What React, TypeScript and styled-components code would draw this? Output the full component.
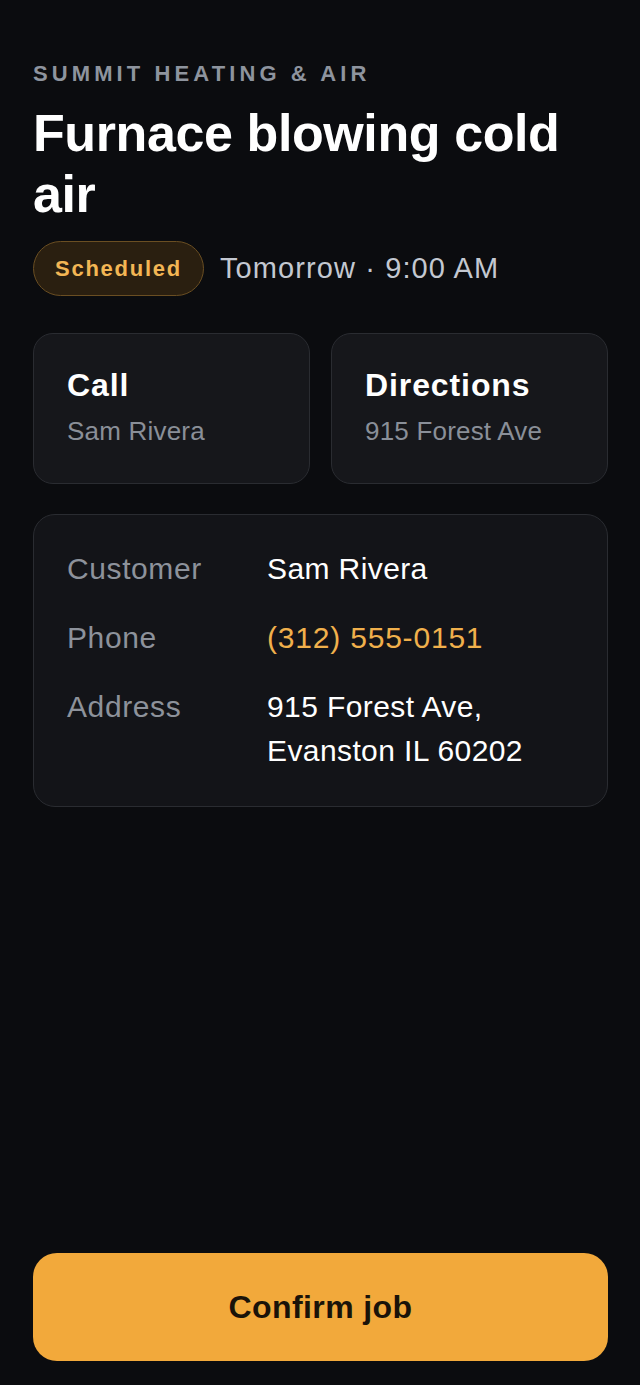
import React from 'react';
import styled, { createGlobalStyle } from 'styled-components';

const GlobalStyle = createGlobalStyle`
  html, body {
    margin: 0;
    padding: 0;
    background: #0b0c0f;
  }
  * {
    box-sizing: border-box;
  }
`;

const Page = styled.div`
  display: flex;
  flex-direction: column;
  min-height: 100vh;
  padding: 60px 32px 24px 33px;
  background: #0b0c0f;
  font-family: 'Liberation Sans', Arial, sans-serif;
  color: #ffffff;
`;

const Eyebrow = styled.div`
  font-size: 22px;
  font-weight: 700;
  letter-spacing: 4.1px;
  color: #8e949e;
  line-height: 28px;
`;

const Title = styled.h1`
  margin: 15px 0 0;
  font-size: 52px;
  font-weight: 700;
  letter-spacing: -0.4px;
  line-height: 61px;
  color: #ffffff;
`;

const StatusRow = styled.div`
  display: flex;
  align-items: center;
  gap: 16px;
  margin-top: 16px;
`;

const Badge = styled.span`
  display: inline-flex;
  align-items: center;
  height: 55px;
  padding: 0 21px;
  border-radius: 28px;
  background: #2a1f10;
  border: 1.5px solid #6a4e22;
  color: #f3b654;
  font-size: 22px;
  font-weight: 700;
  letter-spacing: 1.75px;
`;

const When = styled.span`
  font-size: 29px;
  letter-spacing: 1.1px;
  color: #c3c8d1;
`;

const ActionGrid = styled.div`
  display: grid;
  grid-template-columns: 1fr 1fr;
  gap: 21px;
  margin-top: 37px;
`;

const Card = styled.div`
  background: #16171b;
  border: 1.5px solid #2a2c31;
  border-radius: 20px;
`;

const ActionCard = styled(Card)`
  display: flex;
  flex-direction: column;
  height: 151px;
  padding: 32px 33px;
`;

const ActionTitle = styled.div`
  font-size: 32px;
  font-weight: 700;
  line-height: 38px;
  letter-spacing: 0.9px;
  color: #ffffff;
`;

const ActionSub = styled.div`
  margin-top: 11px;
  font-size: 26px;
  line-height: 32px;
  letter-spacing: 0.2px;
  color: #8a8f98;
`;

const DetailCard = styled(Card)`
  display: grid;
  grid-template-columns: 200px 1fr;
  row-gap: 25px;
  margin-top: 30px;
  padding: 32px 33px 33px;
  border-radius: 22px;
  background: #131418;
`;

const Label = styled.div`
  font-size: 30px;
  line-height: 44px;
  letter-spacing: 0.6px;
  color: #8d929b;
`;

const Value = styled.div<{ $accent?: boolean }>`
  font-size: 30px;
  line-height: 44px;
  letter-spacing: ${(p) => (p.$accent ? '0.8px' : '0.4px')};
  color: ${(p) => (p.$accent ? '#f0b04c' : '#ffffff')};
`;

const ConfirmButton = styled.button`
  margin-top: auto;
  height: 108px;
  width: 100%;
  border: none;
  border-radius: 24px;
  background: #f2a93b;
  color: #1a1309;
  font-family: inherit;
  font-size: 32px;
  font-weight: 700;
  letter-spacing: 0.4px;
  cursor: pointer;
`;

export default function App() {
  return (
    <>
      <GlobalStyle />
      <Page>
        <Eyebrow>SUMMIT HEATING &amp; AIR</Eyebrow>
        <Title>Furnace blowing cold air</Title>
        <StatusRow>
          <Badge>Scheduled</Badge>
          <When>Tomorrow · 9:00 AM</When>
        </StatusRow>

        <ActionGrid>
          <ActionCard>
            <ActionTitle>Call</ActionTitle>
            <ActionSub>Sam Rivera</ActionSub>
          </ActionCard>
          <ActionCard>
            <ActionTitle>Directions</ActionTitle>
            <ActionSub>915 Forest Ave</ActionSub>
          </ActionCard>
        </ActionGrid>

        <DetailCard>
          <Label>Customer</Label>
          <Value>Sam Rivera</Value>
          <Label>Phone</Label>
          <Value $accent>(312) 555-0151</Value>
          <Label>Address</Label>
          <Value>
            915 Forest Ave,
            <br />
            Evanston IL 60202
          </Value>
        </DetailCard>

        <ConfirmButton>Confirm job</ConfirmButton>
      </Page>
    </>
  );
}
